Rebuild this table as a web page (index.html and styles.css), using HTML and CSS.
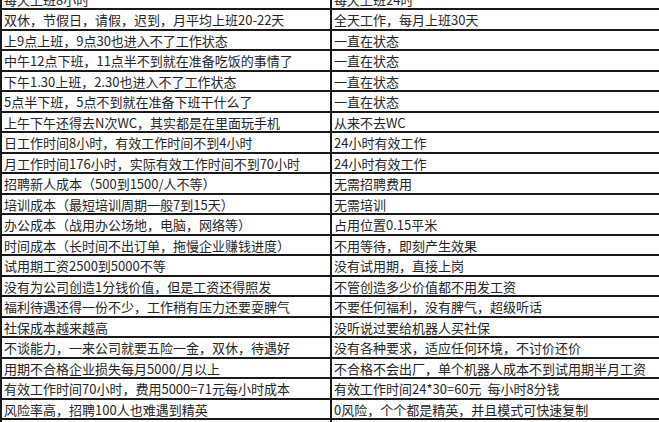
FILE: index.html
```html
<!DOCTYPE html>
<html lang="zh-CN">
<head>
<meta charset="utf-8">
<title>员工 vs 机器人</title>
<link rel="stylesheet" href="styles.css">
</head>
<body>
<div class="cmp">
  <div class="row"><div class="l">每天上班8小时</div><div class="r">每天上班24时</div></div>
  <div class="row"><div class="l">双休，节假日，请假，迟到，月平均上班20-22天</div><div class="r">全天工作，每月上班30天</div></div>
  <div class="row"><div class="l">上9点上班，9点30也进入不了工作状态</div><div class="r">一直在状态</div></div>
  <div class="row"><div class="l">中午12点下班，11点半不到就在准备吃饭的事情了</div><div class="r">一直在状态</div></div>
  <div class="row"><div class="l">下午1.30上班，2.30也进入不了工作状态</div><div class="r">一直在状态</div></div>
  <div class="row"><div class="l">5点半下班，5点不到就在准备下班干什么了</div><div class="r">一直在状态</div></div>
  <div class="row"><div class="l">上午下午还得去N次WC，其实都是在里面玩手机</div><div class="r">从来不去WC</div></div>
  <div class="row"><div class="l">日工作时间8小时，有效工作时间不到4小时</div><div class="r">24小时有效工作</div></div>
  <div class="row"><div class="l">月工作时间176小时，实际有效工作时间不到70小时</div><div class="r">24小时有效工作</div></div>
  <div class="row"><div class="l">招聘新人成本（500到1500/人不等）</div><div class="r">无需招聘费用</div></div>
  <div class="row"><div class="l">培训成本（最短培训周期一般7到15天）</div><div class="r">无需培训</div></div>
  <div class="row"><div class="l">办公成本（战用办公场地，电脑，网络等）</div><div class="r">占用位置0.15平米</div></div>
  <div class="row"><div class="l">时间成本（长时间不出订单，拖慢企业赚钱进度）</div><div class="r">不用等待，即刻产生效果</div></div>
  <div class="row"><div class="l">试用期工资2500到5000不等</div><div class="r">没有试用期，直接上岗</div></div>
  <div class="row"><div class="l">没有为公司创造1分钱价值，但是工资还得照发</div><div class="r">不管创造多少价值都不用发工资</div></div>
  <div class="row"><div class="l">福利待遇还得一份不少，工作稍有压力还要耍脾气</div><div class="r">不要任何福利，没有脾气，超级听话</div></div>
  <div class="row"><div class="l">社保成本越来越高</div><div class="r">没听说过要给机器人买社保</div></div>
  <div class="row"><div class="l">不谈能力，一来公司就要五险一金，双休，待遇好</div><div class="r">没有各种要求，适应任何环境，不讨价还价</div></div>
  <div class="row"><div class="l">用期不合格企业损失每月5000/月以上</div><div class="r">不合格不会出厂，单个机器人成本不到试用期半月工资</div></div>
  <div class="row"><div class="l">有效工作时间70小时，费用5000=71元每小时成本</div><div class="r">有效工作时间24*30=60元&nbsp; 每小时8分钱</div></div>
  <div class="row"><div class="l">风险率高，招聘100人也难遇到精英</div><div class="r">0风险，个个都是精英，并且模式可快速复制</div></div>
  <div class="row"><div class="l">&nbsp;</div><div class="r">&nbsp;</div></div>
</div>
</body>
</html>
```

FILE: styles.css
```css
html, body {
  margin: 0;
  padding: 0;
  background: #ffffff;
}

body {
  width: 659px;
  height: 422px;
  overflow: hidden;
  font-family: "Noto Sans CJK SC", "Noto Sans", sans-serif;
  font-size: 13px;
  color: #262626;
}

.cmp {
  margin-top: -10.5px;
}

.row {
  display: grid;
  grid-template-columns: 332px 1fr;
  height: 20.5px;
  box-sizing: border-box;
  border-bottom: 2px solid #1a1a1a;
}

.row > div {
  padding-left: 2px;
  line-height: 19px;
  white-space: nowrap;
  overflow: hidden;
}

.row > .l {
  border-left: 2px solid #1a1a1a;
  border-right: 2px solid #1a1a1a;
}
```
